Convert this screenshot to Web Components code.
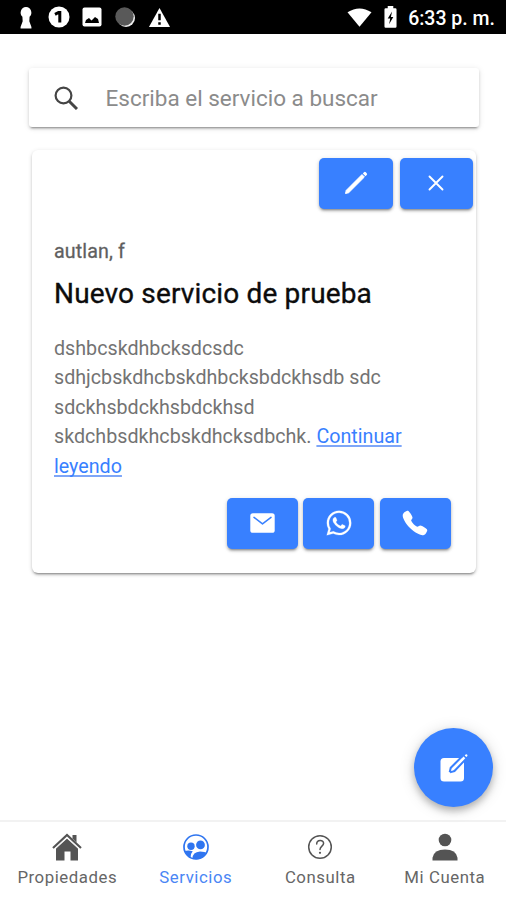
<!DOCTYPE html>
<html lang="es">
<head>
<meta charset="utf-8">
<title>Servicios</title>
<style>
html,body{margin:0;height:100%;background:#fff}
body{font-family:Roboto,"Open Sans",sans-serif;overflow:hidden}
</style>
</head>
<body>
<services-page></services-page>
<script>
const ICONS = {
  keyhole:['0 0 16 24','<path fill="#fff" d="M8 1a5.900 5.900 0 0 0-4.100 10.300L4.200 16 1.800 22v1.500h12.400V22L11.800 16l.3-4.700A5.900 5.900 0 0 0 8 1z"/>'],
  one:['0 0 22 22','<circle cx="11" cy="11" r="10.500" fill="#fff"/><path d="M7 8.300l3.500-1.800h1.300V16.500" fill="none" stroke="#000" stroke-width="3"/>'],
  image:['0 0 20 20','<rect x=".5" y=".5" width="19" height="19" rx="2" fill="#fff"/><path d="M3 16l1-3 3-2 2.500 2.500L13 10l3 2 1 4z" fill="#000"/>'],
  moon:['0 0 22 22','<circle cx="12" cy="12" r="9" fill="#eee"/><circle cx="10.500" cy="10.500" r="9.200" fill="#595959"/>'],
  warn:['0 0 24 22','<path d="M12 1L23 21H1z" fill="#fff"/><path d="M12 7v7M12 16v2.500" stroke="#000" stroke-width="2.600"/>'],
  wifi:['0 0 26 20','<path d="M.5 4.500Q13-3.500 25.500 4.500L13 19.800z" fill="#fff"/>'],
  battery:['0 0 14 22','<path d="M4 0h6v2.300h2.200q1.300 0 1.300 1.300V20.500q0 1.300-1.300 1.300H1.800Q.5 21.800.5 20.500V3.600q0-1.300 1.300-1.300H4z" fill="#fff"/><path d="M8.700 5.500L4 12.600h2.700L5.500 18.300 10 11H7.400z" fill="#000"/>'],
  search:['0 0 24 24','<circle cx="9.500" cy="9.500" r="7.900" fill="none" stroke="#454545" stroke-width="2.200"/><path d="M15.200 15.200l7.800 7.800" stroke="#454545" stroke-width="3"/>'],
  pencil:['0 0 24 24','<path d="M1.500 22.500l.8-3.200L18 3.600l2.400 2.400L4.700 21.700z" fill="#fff" stroke="#fff" stroke-linejoin="round"/><path d="M18.800 2.500l1.200-1.200q.9-.9 1.800 0l.9.900q.9.900 0 1.800l-1.200 1.200z" fill="#fff"/>'],
  close:['0 0 16 16','<path d="M1.500 1.500l13 13M14.500 1.500l-13 13" fill="none" stroke="#fff" stroke-width="1.900" stroke-linecap="round"/>'],
  mail:['0 0 25 20','<rect x=".3" y=".2" width="24.400" height="19.600" rx="2.600" fill="#fff"/><path d="M4 4.400l8.500 6.500L21 4.400" fill="none" stroke="#3880ff" stroke-width="1.500" stroke-linecap="round" stroke-linejoin="round"/>'],
  whatsapp:['0 0 512 512','<path fill="#fff" stroke="#fff" stroke-width="4" fill-rule="evenodd" d="M414.730 97.100A222.140 222.140 0 0 0 256.940 32C134 32 33.920 131.580 33.870 254a220.610 220.610 0 0 0 29.780 111L32 480l118.250-30.870a223.630 223.630 0 0 0 106.600 27h.09c122.930 0 223-99.590 223.060-222A220.180 220.180 0 0 0 414.730 97.100zM256.940 438.660h-.08a185.750 185.750 0 0 1-94.360-25.720l-6.770-4-70.170 18.320 18.730-68.090-4.410-7A183.460 183.460 0 0 1 71.530 254c0-101.730 83.210-184.500 185.480-184.500a185 185 0 0 1 185.330 184.640c-.04 101.740-83.210 184.520-185.400 184.520zm101.690-138.190c-5.570-2.780-33-16.200-38.080-18.050s-8.830-2.780-12.540 2.780-14.400 18-17.650 21.750-6.500 4.160-12.070 1.380-23.540-8.630-44.830-27.530c-16.570-14.710-27.750-32.870-31-38.420s-.35-8.560 2.440-11.320c2.510-2.490 5.570-6.480 8.360-9.720s3.720-5.560 5.570-9.260.93-6.940-.46-9.710-12.540-30.080-17.180-41.190c-4.530-10.820-9.120-9.350-12.540-9.520-3.250-.16-7-.2-10.690-.2a20.530 20.530 0 0 0-14.860 6.940c-5.110 5.560-19.510 19-19.510 46.280s20 53.680 22.760 57.380 39.300 59.730 95.210 83.760a323.110 323.110 0 0 0 31.780 11.680c13.350 4.220 25.500 3.630 35.100 2.200 10.710-1.590 33-13.420 37.630-26.380s4.640-24.060 3.250-26.370-5.110-3.710-10.690-6.480z"/>'],
  phone:['0 0 512 512','<path fill="#fff" d="M391 480c-19.520 0-46.940-7.060-88-30-49.930-28-88.550-53.850-138.210-103.380C116.910 298.770 93.610 267.790 61 208.450c-36.840-67-30.560-102.120-23.540-117.130C45.820 73.380 58.160 62.650 74.110 52a176.300 176.300 0 0 1 28.640-15.200c1-.43 1.930-.84 2.760-1.210 4.950-2.230 12.450-5.600 21.950-2 6.340 2.380 12 7.250 20.860 16 18.170 17.920 43 57.830 52.160 77.430 6.150 13.210 10.220 21.930 10.230 31.710 0 11.450-5.760 20.280-12.750 29.810-1.310 1.790-2.610 3.500-3.870 5.160-7.610 10-9.280 12.890-8.180 18.050 2.230 10.370 18.860 41.240 46.190 68.510s57.310 42.850 67.720 45.070c5.380 1.150 8.330-.59 18.650-8.470 1.480-1.130 3-2.300 4.590-3.470 10.660-7.930 19.080-13.540 30.260-13.540h.06c9.730 0 18.060 4.220 31.860 11.180 18 9.080 59.110 33.590 77.140 51.780 8.770 8.840 13.660 14.480 16.050 20.810 3.600 9.530.21 17-2 22-.37.830-.78 1.740-1.210 2.750a176.490 176.490 0 0 1-15.290 28.580c-10.630 15.900-21.400 28.210-39.380 36.580A67.420 67.420 0 0 1 391 480z"/>'],
  compose:['0 0 28 29','<rect x=".5" y="5" width="23.500" height="23.500" rx="3.500" fill="#fff"/><path d="M9.800 19.300l1-4.600L24.500 1.300M9.800 19.300l4.600-1.200L27.200 4.400" fill="none" stroke="#3880ff" stroke-width="2.200"/><path d="M11 18l1-2.600L23.600 3.600l1.700 1.700L13.600 17z" fill="#fff"/><path d="M24.700 2.500l.9-.9q.7-.7 1.400 0l.2.200q.7.700 0 1.400l-.9.900z" fill="#fff"/>'],
  home:['0 0 30 28','<path d="M20.500 2h4v7.500l-4-4z" fill="#545454"/><path d="M4 14.500L15 5l11 9.500v13h-7.500v-9h-6v9H4z" fill="#545454"/><path d="M1 15L15 2l14 13" fill="none" stroke="#545454" stroke-width="2.200"/><path d="M3 15.800L15 4.900 27 15.800" fill="none" stroke="#fff" stroke-width="1.100"/>'],
  people:['0 0 26 26','<circle cx="13" cy="13" r="12" fill="none" stroke="#2f75f0" stroke-width="1.700"/><circle cx="8" cy="12.300" r="3.700" fill="#2f75f0"/><circle cx="17.500" cy="10.900" r="4.400" fill="#2f75f0"/><path d="M9.500 24.500Q9.500 18 17 17.500q5 0 7.200 1.600A12.500 12.500 0 0 1 9.500 24.500zM1.500 17q4-1.200 8.200.2-2.400 2.800-1.900 6.600Q3.500 22 1.500 17z" fill="#2f75f0"/>'],
  help:['0 0 26 26','<circle cx="13" cy="13" r="11.300" fill="none" stroke="#545454" stroke-width="1.500"/><path d="M9.700 9.900c0-4.300 6.900-4.400 6.900-.6 0 2.700-3.600 3-3.600 6.200" fill="none" stroke="#545454" stroke-width="1.500" stroke-linecap="round"/><circle cx="13" cy="18.800" r="1.100" fill="#545454"/>'],
  person:['0 0 26 28','<circle cx="13" cy="7" r="6.300" fill="#545454"/><path d="M.5 27.500v-2.800Q2 16.500 13 16.500t12.500 8.200v2.800z" fill="#545454"/>']
};
function define(name, html){
  const t = document.createElement('template');
  t.innerHTML = html;
  customElements.define(name, class extends HTMLElement{
    constructor(){ super(); this.attachShadow({mode:'open'}).append(t.content.cloneNode(true)); }
  });
}
customElements.define('app-icon', class extends HTMLElement{
  constructor(){ super(); this.attachShadow({mode:'open'}); }
  connectedCallback(){
    const [box, art] = ICONS[this.getAttribute('name')];
    const w = this.getAttribute('w'), h = this.getAttribute('h') || w;
    this.shadowRoot.innerHTML = `<style>:host{display:block;flex:none}svg{display:block}</style>
      <svg width="${w}" height="${h}" viewBox="${box}" preserveAspectRatio="none" aria-hidden="true">${art}</svg>`;
  }
});
define('status-bar', `<style>
:host{display:flex;height:34px;flex:none;background:#000;color:#fff;align-items:center;box-sizing:border-box;padding:0 11px 0 19px;justify-content:space-between}
div{display:flex;align-items:center}
.l{gap:12px}.r{gap:11px}
.l app-icon:first-child{margin-right:3px}
.r app-icon:first-child{margin-right:1px}
.r{margin-right:0}
.t{font-weight:500;font-size:19.500px;line-height:34px;padding-top:3px;white-space:nowrap}
</style>
<div class="l"><app-icon name="keyhole" w="14" h="23"></app-icon><app-icon name="one" w="22"></app-icon><app-icon name="image" w="20"></app-icon><app-icon name="moon" w="22"></app-icon><app-icon name="warn" w="23" h="21"></app-icon></div>
<div class="r"><app-icon name="wifi" w="25" h="19"></app-icon><app-icon name="battery" w="13" h="22"></app-icon><span class="t">6:33 p. m.</span></div>`);
define('search-bar', `<style>
:host{display:flex;align-items:center;height:59px;margin:34px 27.500px 0 28.500px;padding:0 25px;box-sizing:border-box;gap:28px;background:#fff;border-radius:3px;flex:none;
box-shadow:0 3px 2px -2px rgba(0,0,0,.3),0 2px 3px rgba(0,0,0,.14),0 1px 6px rgba(0,0,0,.1)}
span{font-size:22.500px;line-height:26px;color:#8b8b8b;white-space:nowrap}
</style><app-icon name="search" w="24" h="24"></app-icon><span><slot></slot></span>`);
define('app-button', `<style>
:host{display:flex;align-items:center;justify-content:center;width:var(--w,71px);height:51px;border-radius:5px;background:#3880ff;box-shadow:0 3px 2px -2px rgba(0,0,0,.25),0 2px 3px rgba(0,0,0,.2),0 1px 5px rgba(0,0,0,.12)}
slot{display:block;margin-top:-1px}
</style><slot></slot>`);
define('service-card', `<style>
:host{display:flex;flex-direction:column;box-sizing:border-box;margin:23px 30px 0 31.500px;height:423px;background:#fff;border-radius:6px;flex:none;
box-shadow:0 3px 2px -2px rgba(0,0,0,.3),0 2px 3px rgba(0,0,0,.16),0 1px 5px rgba(0,0,0,.11)}
.top{display:flex;justify-content:flex-end;gap:7px;padding:8px 3px 0 0;--w:73.500px}
.sub{margin:31px 0 0 22.500px;font-size:19.700px;color:#5c5c5c;-webkit-text-stroke:.3px #6a6a6a;line-height:24px;letter-spacing:.1px}
.title{margin:13px 0 0 22.500px;font-size:28px;color:#0c0c0c;-webkit-text-stroke:.35px #0c0c0c;line-height:34px;letter-spacing:.16px;white-space:nowrap}
.body{margin:22.500px 0 0 22.500px;font-size:19.700px;line-height:29.500px;color:#737373}
.bot{display:flex;justify-content:flex-end;gap:5.500px;padding:17px 25.500px 0 0}
</style>
<div class="top"><slot name="tools"></slot></div>
<div class="sub"><slot name="place"></slot></div>
<div class="title"><slot name="title"></slot></div>
<div class="body"><slot></slot></div>
<div class="bot"><slot name="contact"></slot></div>`);
define('text-line', `<style>:host{display:block;white-space:nowrap}</style><slot></slot>`);
define('read-more', `<style>:host{display:inline;color:#3880ff;text-decoration:underline;text-decoration-color:#7ea6f8;text-decoration-thickness:1.500px;text-underline-offset:2px;text-decoration-skip-ink:none}</style><slot></slot>`);
define('fab-button', `<style>
:host{position:absolute;right:13px;bottom:93.500px;width:79px;height:79px;border-radius:50%;background:#3880ff;display:flex;align-items:center;justify-content:center;box-shadow:0 4px 7px rgba(0,0,0,.24),0 2px 16px rgba(0,0,0,.14)}
</style><slot></slot>`);
define('tab-item', `<style>
:host{display:flex;flex-direction:column;align-items:center;color:#666}
:host([active]){color:#4a86f5}
.i{height:28px;display:flex;align-items:center}
.t{font-size:16.800px;line-height:22px;margin-top:5px;letter-spacing:.55px;margin-right:-.550px;white-space:nowrap}
</style><div class="i"><slot name="icon"></slot></div><div class="t"><slot></slot></div>`);
define('tab-bar', `<style>
:host{display:grid;grid-template-columns:132px 125px 124px 125px;margin-top:auto;height:80px;box-sizing:border-box;border-top:2px solid #f2f2f2;padding:11px 0 0 1px;background:#fff;flex:none}
</style><slot></slot>`);
define('services-page', `<style>
:host{display:flex;flex-direction:column;position:relative;width:506px;height:900px;background:#fff;overflow:hidden}
</style>
<status-bar></status-bar>
<search-bar>Escriba el servicio a buscar</search-bar>
<service-card>
<app-button slot="tools"><app-icon name="pencil" w="24"></app-icon></app-button>
<app-button slot="tools"><app-icon name="close" w="16"></app-icon></app-button>
<span slot="place">autlan, f</span>
<span slot="title">Nuevo servicio de prueba</span>
<text-line>dshbcskdhbcksdcsdc</text-line>
<text-line>sdhjcbskdhcbskdhbcksbdckhsdb sdc</text-line>
<text-line>sdckhsbdckhsbdckhsd</text-line>
<text-line>skdchbsdkhcbskdhcksdbchk. <read-more>Continuar</read-more></text-line>
<text-line><read-more>leyendo</read-more></text-line>
<app-button slot="contact"><app-icon name="mail" w="25" h="20"></app-icon></app-button>
<app-button slot="contact"><app-icon name="whatsapp" w="28"></app-icon></app-button>
<app-button slot="contact"><app-icon name="phone" w="28"></app-icon></app-button>
</service-card>
<tab-bar>
<tab-item><app-icon slot="icon" name="home" w="30" h="28"></app-icon>Propiedades</tab-item>
<tab-item active><app-icon slot="icon" name="people" w="26"></app-icon>Servicios</tab-item>
<tab-item><app-icon slot="icon" name="help" w="26"></app-icon>Consulta</tab-item>
<tab-item><app-icon slot="icon" name="person" w="26" h="28"></app-icon>Mi Cuenta</tab-item>
</tab-bar>
<fab-button><app-icon name="compose" w="28" h="29"></app-icon></fab-button>`);
</script>
</body>
</html>
